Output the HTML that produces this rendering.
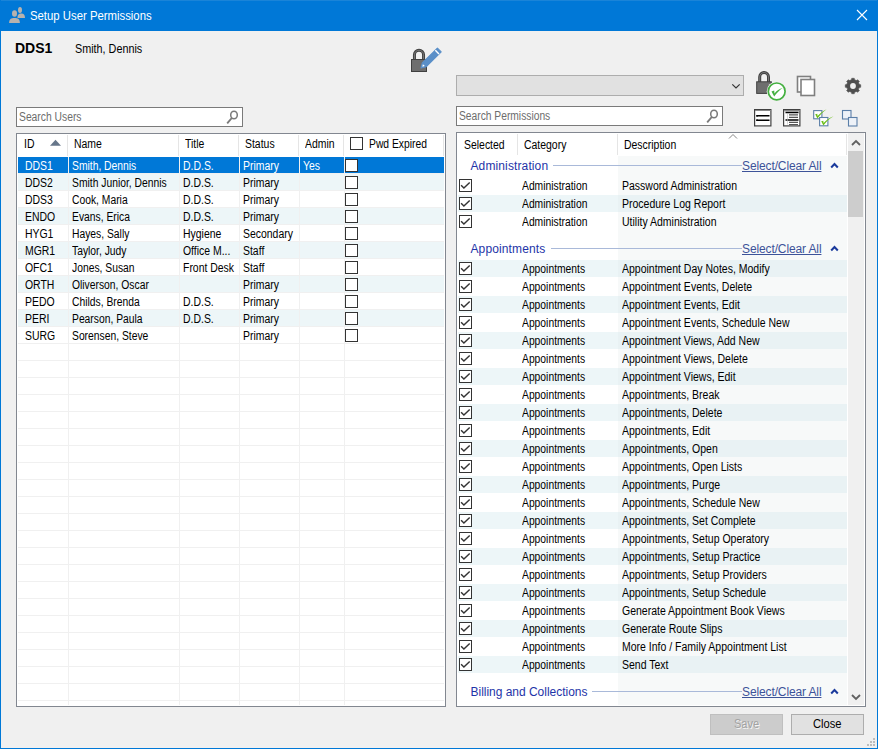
<!DOCTYPE html>
<html><head><meta charset="utf-8"><title>Setup User Permissions</title>
<style>
html,body{margin:0;padding:0;}
body{width:878px;height:749px;position:relative;overflow:hidden;background:#F0F0F0;font-family:"Liberation Sans", sans-serif;}
.r{position:absolute;box-sizing:content-box;}
.t{position:absolute;white-space:pre;font-family:"Liberation Sans", sans-serif;}
svg.r{overflow:visible;}
</style></head><body>
<div class="r" style="left:0px;top:0px;width:878px;height:31px;background:#0078D7"></div>
<div class="r" style="left:0px;top:0px;width:878px;height:1px;background:#1A84D8"></div>
<div class="r" style="left:0px;top:0px;width:1px;height:749px;background:#0078D7"></div>
<div class="r" style="left:877px;top:0px;width:1px;height:749px;background:#0078D7"></div>
<div class="r" style="left:0px;top:748px;width:878px;height:1px;background:#0078D7"></div>
<svg class="r" style="left:8px;top:6px" width="18" height="18" viewBox="0 0 18 18">
<ellipse cx="12" cy="4" rx="2" ry="3" fill="#B7B2AE"/>
<path d="M9.4 12 C9.6 8.6 10.8 7.6 13.2 7.6 C15.6 7.6 16.8 8.6 17 12 Z" fill="#B7B2AE"/>
<ellipse cx="6.5" cy="7.5" rx="2.6" ry="3.4" fill="#0078D7"/>
<path d="M0.2 17.8 C0.3 13.2 2.2 11.2 6.5 11.2 C10.8 11.2 12.7 13.2 12.8 17.8 Z" fill="#0078D7"/>
<ellipse cx="6.5" cy="7.5" rx="2.5" ry="3.3" fill="#B7B2AE"/>
<path d="M1.1 17 C1.2 13.2 3 12 6.5 12 C10 12 11.8 13.2 11.9 17 Z" fill="#B7B2AE"/>
</svg>
<div class="t" style="left:30px;top:10.00px;font-size:12px;line-height:12px;color:#fff;font-weight:normal;transform:scaleX(0.945);transform-origin:0 0;">Setup User Permissions</div>
<svg class="r" style="left:856px;top:9px" width="12" height="12" viewBox="0 0 12 12">
<path d="M1 1 L11 11 M11 1 L1 11" stroke="#fff" stroke-width="1.1"/></svg>
<div class="t" style="left:15px;top:41.00px;font-size:14px;line-height:14px;color:#000;font-weight:bold;">DDS1</div>
<div class="t" style="left:75px;top:43.00px;font-size:12px;line-height:12px;color:#000;font-weight:normal;transform:scaleX(0.9);transform-origin:0 0;">Smith, Dennis</div>
<div class="r" style="left:16px;top:107px;width:225px;height:18px;background:#fff;border:1px solid #7A7A7A"></div>
<div class="t" style="left:19px;top:111.00px;font-size:12px;line-height:12px;color:#6D6D6D;font-weight:normal;transform:scaleX(0.86);transform-origin:0 0;">Search Users</div>
<svg class="r" style="left:226px;top:106.9px" width="16" height="18" viewBox="0 0 16 18">
<ellipse cx="8" cy="8" rx="3.3" ry="3.8" fill="none" stroke="#7A7A7A" stroke-width="1.5"/>
<path d="M5.8 11 L1.2 16.3" stroke="#7A7A7A" stroke-width="1.9"/></svg>
<div class="r" style="left:16px;top:133px;width:428px;height:572px;background:#fff;border:1px solid #828790"></div>
<div class="r" style="left:67px;top:135px;width:1px;height:21px;background:#E5E5E5"></div>
<div class="r" style="left:178px;top:135px;width:1px;height:21px;background:#E5E5E5"></div>
<div class="r" style="left:238px;top:135px;width:1px;height:21px;background:#E5E5E5"></div>
<div class="r" style="left:298px;top:135px;width:1px;height:21px;background:#E5E5E5"></div>
<div class="r" style="left:343px;top:135px;width:1px;height:21px;background:#E5E5E5"></div>
<div class="r" style="left:443px;top:135px;width:1px;height:21px;background:#E5E5E5"></div>
<div class="t" style="left:24px;top:138.00px;font-size:12px;line-height:12px;color:#000;font-weight:normal;transform:scaleX(0.87);transform-origin:0 0;">ID</div>
<svg class="r" style="left:50px;top:139px" width="11" height="7" viewBox="0 0 11 7"><path d="M5.5 0.8 L11 6.8 L0 6.8 Z" fill="#66768A"/></svg>
<div class="t" style="left:74px;top:138.00px;font-size:12px;line-height:12px;color:#000;font-weight:normal;transform:scaleX(0.87);transform-origin:0 0;">Name</div>
<div class="t" style="left:185px;top:138.00px;font-size:12px;line-height:12px;color:#000;font-weight:normal;transform:scaleX(0.87);transform-origin:0 0;">Title</div>
<div class="t" style="left:245px;top:138.00px;font-size:12px;line-height:12px;color:#000;font-weight:normal;transform:scaleX(0.87);transform-origin:0 0;">Status</div>
<div class="t" style="left:305px;top:138.00px;font-size:12px;line-height:12px;color:#000;font-weight:normal;transform:scaleX(0.87);transform-origin:0 0;">Admin</div>
<div class="r" style="left:350px;top:137px;width:11px;height:11px;border:1px solid #333;background:#fff"></div>
<div class="t" style="left:369px;top:138.00px;font-size:12px;line-height:12px;color:#000;font-weight:normal;transform:scaleX(0.86);transform-origin:0 0;">Pwd Expired</div>
<div class="r" style="left:18px;top:173px;width:426px;height:1px;background:#F0F0F0"></div>
<div class="r" style="left:18px;top:190px;width:426px;height:1px;background:#F0F0F0"></div>
<div class="r" style="left:18px;top:207px;width:426px;height:1px;background:#F0F0F0"></div>
<div class="r" style="left:18px;top:224px;width:426px;height:1px;background:#F0F0F0"></div>
<div class="r" style="left:18px;top:241px;width:426px;height:1px;background:#F0F0F0"></div>
<div class="r" style="left:18px;top:258px;width:426px;height:1px;background:#F0F0F0"></div>
<div class="r" style="left:18px;top:275px;width:426px;height:1px;background:#F0F0F0"></div>
<div class="r" style="left:18px;top:292px;width:426px;height:1px;background:#F0F0F0"></div>
<div class="r" style="left:18px;top:309px;width:426px;height:1px;background:#F0F0F0"></div>
<div class="r" style="left:18px;top:326px;width:426px;height:1px;background:#F0F0F0"></div>
<div class="r" style="left:18px;top:343px;width:426px;height:1px;background:#F0F0F0"></div>
<div class="r" style="left:18px;top:360px;width:426px;height:1px;background:#F0F0F0"></div>
<div class="r" style="left:18px;top:377px;width:426px;height:1px;background:#F0F0F0"></div>
<div class="r" style="left:18px;top:394px;width:426px;height:1px;background:#F0F0F0"></div>
<div class="r" style="left:18px;top:411px;width:426px;height:1px;background:#F0F0F0"></div>
<div class="r" style="left:18px;top:428px;width:426px;height:1px;background:#F0F0F0"></div>
<div class="r" style="left:18px;top:445px;width:426px;height:1px;background:#F0F0F0"></div>
<div class="r" style="left:18px;top:462px;width:426px;height:1px;background:#F0F0F0"></div>
<div class="r" style="left:18px;top:479px;width:426px;height:1px;background:#F0F0F0"></div>
<div class="r" style="left:18px;top:496px;width:426px;height:1px;background:#F0F0F0"></div>
<div class="r" style="left:18px;top:513px;width:426px;height:1px;background:#F0F0F0"></div>
<div class="r" style="left:18px;top:530px;width:426px;height:1px;background:#F0F0F0"></div>
<div class="r" style="left:18px;top:547px;width:426px;height:1px;background:#F0F0F0"></div>
<div class="r" style="left:18px;top:564px;width:426px;height:1px;background:#F0F0F0"></div>
<div class="r" style="left:18px;top:581px;width:426px;height:1px;background:#F0F0F0"></div>
<div class="r" style="left:18px;top:598px;width:426px;height:1px;background:#F0F0F0"></div>
<div class="r" style="left:18px;top:615px;width:426px;height:1px;background:#F0F0F0"></div>
<div class="r" style="left:18px;top:632px;width:426px;height:1px;background:#F0F0F0"></div>
<div class="r" style="left:18px;top:649px;width:426px;height:1px;background:#F0F0F0"></div>
<div class="r" style="left:18px;top:666px;width:426px;height:1px;background:#F0F0F0"></div>
<div class="r" style="left:18px;top:683px;width:426px;height:1px;background:#F0F0F0"></div>
<div class="r" style="left:18px;top:700px;width:426px;height:1px;background:#F0F0F0"></div>
<div class="r" style="left:18px;top:157px;width:50px;height:16px;background:#0078D7"></div>
<div class="r" style="left:69px;top:157px;width:110px;height:16px;background:#0078D7"></div>
<div class="r" style="left:180px;top:157px;width:59px;height:16px;background:#0078D7"></div>
<div class="r" style="left:240px;top:157px;width:59px;height:16px;background:#0078D7"></div>
<div class="r" style="left:300px;top:157px;width:44px;height:16px;background:#0078D7"></div>
<div class="r" style="left:345px;top:157px;width:99px;height:16px;background:#0078D7"></div>
<div class="t" style="left:25px;top:160.00px;font-size:12px;line-height:12px;color:#fff;font-weight:normal;transform:scaleX(0.87);transform-origin:0 0;">DDS1</div>
<div class="t" style="left:72px;top:160.00px;font-size:12px;line-height:12px;color:#fff;font-weight:normal;transform:scaleX(0.86);transform-origin:0 0;">Smith, Dennis</div>
<div class="t" style="left:182.5px;top:160.00px;font-size:12px;line-height:12px;color:#fff;font-weight:normal;transform:scaleX(0.87);transform-origin:0 0;">D.D.S.</div>
<div class="t" style="left:242.5px;top:160.00px;font-size:12px;line-height:12px;color:#fff;font-weight:normal;transform:scaleX(0.87);transform-origin:0 0;">Primary</div>
<div class="t" style="left:303px;top:160.00px;font-size:12px;line-height:12px;color:#fff;font-weight:normal;transform:scaleX(0.87);transform-origin:0 0;">Yes</div>
<div class="r" style="left:345px;top:159px;width:11px;height:11px;border:1px solid #333;background:#fff"></div>
<div class="r" style="left:18px;top:174px;width:426px;height:16px;background:#EDF6F8"></div>
<div class="t" style="left:25px;top:177.00px;font-size:12px;line-height:12px;color:#000;font-weight:normal;transform:scaleX(0.87);transform-origin:0 0;">DDS2</div>
<div class="t" style="left:72px;top:177.00px;font-size:12px;line-height:12px;color:#000;font-weight:normal;transform:scaleX(0.86);transform-origin:0 0;">Smith Junior, Dennis</div>
<div class="t" style="left:182.5px;top:177.00px;font-size:12px;line-height:12px;color:#000;font-weight:normal;transform:scaleX(0.87);transform-origin:0 0;">D.D.S.</div>
<div class="t" style="left:242.5px;top:177.00px;font-size:12px;line-height:12px;color:#000;font-weight:normal;transform:scaleX(0.87);transform-origin:0 0;">Primary</div>
<div class="t" style="left:303px;top:177.00px;font-size:12px;line-height:12px;color:#000;font-weight:normal;transform:scaleX(0.87);transform-origin:0 0;"></div>
<div class="r" style="left:345px;top:176px;width:11px;height:11px;border:1px solid #333;background:#fff"></div>
<div class="t" style="left:25px;top:194.00px;font-size:12px;line-height:12px;color:#000;font-weight:normal;transform:scaleX(0.87);transform-origin:0 0;">DDS3</div>
<div class="t" style="left:72px;top:194.00px;font-size:12px;line-height:12px;color:#000;font-weight:normal;transform:scaleX(0.86);transform-origin:0 0;">Cook, Maria</div>
<div class="t" style="left:182.5px;top:194.00px;font-size:12px;line-height:12px;color:#000;font-weight:normal;transform:scaleX(0.87);transform-origin:0 0;">D.D.S.</div>
<div class="t" style="left:242.5px;top:194.00px;font-size:12px;line-height:12px;color:#000;font-weight:normal;transform:scaleX(0.87);transform-origin:0 0;">Primary</div>
<div class="t" style="left:303px;top:194.00px;font-size:12px;line-height:12px;color:#000;font-weight:normal;transform:scaleX(0.87);transform-origin:0 0;"></div>
<div class="r" style="left:345px;top:193px;width:11px;height:11px;border:1px solid #333;background:#fff"></div>
<div class="r" style="left:18px;top:208px;width:426px;height:16px;background:#EDF6F8"></div>
<div class="t" style="left:25px;top:211.00px;font-size:12px;line-height:12px;color:#000;font-weight:normal;transform:scaleX(0.87);transform-origin:0 0;">ENDO</div>
<div class="t" style="left:72px;top:211.00px;font-size:12px;line-height:12px;color:#000;font-weight:normal;transform:scaleX(0.86);transform-origin:0 0;">Evans, Erica</div>
<div class="t" style="left:182.5px;top:211.00px;font-size:12px;line-height:12px;color:#000;font-weight:normal;transform:scaleX(0.87);transform-origin:0 0;">D.D.S.</div>
<div class="t" style="left:242.5px;top:211.00px;font-size:12px;line-height:12px;color:#000;font-weight:normal;transform:scaleX(0.87);transform-origin:0 0;">Primary</div>
<div class="t" style="left:303px;top:211.00px;font-size:12px;line-height:12px;color:#000;font-weight:normal;transform:scaleX(0.87);transform-origin:0 0;"></div>
<div class="r" style="left:345px;top:210px;width:11px;height:11px;border:1px solid #333;background:#fff"></div>
<div class="t" style="left:25px;top:228.00px;font-size:12px;line-height:12px;color:#000;font-weight:normal;transform:scaleX(0.87);transform-origin:0 0;">HYG1</div>
<div class="t" style="left:72px;top:228.00px;font-size:12px;line-height:12px;color:#000;font-weight:normal;transform:scaleX(0.86);transform-origin:0 0;">Hayes, Sally</div>
<div class="t" style="left:182.5px;top:228.00px;font-size:12px;line-height:12px;color:#000;font-weight:normal;transform:scaleX(0.87);transform-origin:0 0;">Hygiene</div>
<div class="t" style="left:242.5px;top:228.00px;font-size:12px;line-height:12px;color:#000;font-weight:normal;transform:scaleX(0.87);transform-origin:0 0;">Secondary</div>
<div class="t" style="left:303px;top:228.00px;font-size:12px;line-height:12px;color:#000;font-weight:normal;transform:scaleX(0.87);transform-origin:0 0;"></div>
<div class="r" style="left:345px;top:227px;width:11px;height:11px;border:1px solid #333;background:#fff"></div>
<div class="r" style="left:18px;top:242px;width:426px;height:16px;background:#EDF6F8"></div>
<div class="t" style="left:25px;top:245.00px;font-size:12px;line-height:12px;color:#000;font-weight:normal;transform:scaleX(0.87);transform-origin:0 0;">MGR1</div>
<div class="t" style="left:72px;top:245.00px;font-size:12px;line-height:12px;color:#000;font-weight:normal;transform:scaleX(0.86);transform-origin:0 0;">Taylor, Judy</div>
<div class="t" style="left:182.5px;top:245.00px;font-size:12px;line-height:12px;color:#000;font-weight:normal;transform:scaleX(0.87);transform-origin:0 0;">Office M...</div>
<div class="t" style="left:242.5px;top:245.00px;font-size:12px;line-height:12px;color:#000;font-weight:normal;transform:scaleX(0.87);transform-origin:0 0;">Staff</div>
<div class="t" style="left:303px;top:245.00px;font-size:12px;line-height:12px;color:#000;font-weight:normal;transform:scaleX(0.87);transform-origin:0 0;"></div>
<div class="r" style="left:345px;top:244px;width:11px;height:11px;border:1px solid #333;background:#fff"></div>
<div class="t" style="left:25px;top:262.00px;font-size:12px;line-height:12px;color:#000;font-weight:normal;transform:scaleX(0.87);transform-origin:0 0;">OFC1</div>
<div class="t" style="left:72px;top:262.00px;font-size:12px;line-height:12px;color:#000;font-weight:normal;transform:scaleX(0.86);transform-origin:0 0;">Jones, Susan</div>
<div class="t" style="left:182.5px;top:262.00px;font-size:12px;line-height:12px;color:#000;font-weight:normal;transform:scaleX(0.87);transform-origin:0 0;">Front Desk</div>
<div class="t" style="left:242.5px;top:262.00px;font-size:12px;line-height:12px;color:#000;font-weight:normal;transform:scaleX(0.87);transform-origin:0 0;">Staff</div>
<div class="t" style="left:303px;top:262.00px;font-size:12px;line-height:12px;color:#000;font-weight:normal;transform:scaleX(0.87);transform-origin:0 0;"></div>
<div class="r" style="left:345px;top:261px;width:11px;height:11px;border:1px solid #333;background:#fff"></div>
<div class="r" style="left:18px;top:276px;width:426px;height:16px;background:#EDF6F8"></div>
<div class="t" style="left:25px;top:279.00px;font-size:12px;line-height:12px;color:#000;font-weight:normal;transform:scaleX(0.87);transform-origin:0 0;">ORTH</div>
<div class="t" style="left:72px;top:279.00px;font-size:12px;line-height:12px;color:#000;font-weight:normal;transform:scaleX(0.86);transform-origin:0 0;">Oliverson, Oscar</div>
<div class="t" style="left:182.5px;top:279.00px;font-size:12px;line-height:12px;color:#000;font-weight:normal;transform:scaleX(0.87);transform-origin:0 0;"></div>
<div class="t" style="left:242.5px;top:279.00px;font-size:12px;line-height:12px;color:#000;font-weight:normal;transform:scaleX(0.87);transform-origin:0 0;">Primary</div>
<div class="t" style="left:303px;top:279.00px;font-size:12px;line-height:12px;color:#000;font-weight:normal;transform:scaleX(0.87);transform-origin:0 0;"></div>
<div class="r" style="left:345px;top:278px;width:11px;height:11px;border:1px solid #333;background:#fff"></div>
<div class="t" style="left:25px;top:296.00px;font-size:12px;line-height:12px;color:#000;font-weight:normal;transform:scaleX(0.87);transform-origin:0 0;">PEDO</div>
<div class="t" style="left:72px;top:296.00px;font-size:12px;line-height:12px;color:#000;font-weight:normal;transform:scaleX(0.86);transform-origin:0 0;">Childs, Brenda</div>
<div class="t" style="left:182.5px;top:296.00px;font-size:12px;line-height:12px;color:#000;font-weight:normal;transform:scaleX(0.87);transform-origin:0 0;">D.D.S.</div>
<div class="t" style="left:242.5px;top:296.00px;font-size:12px;line-height:12px;color:#000;font-weight:normal;transform:scaleX(0.87);transform-origin:0 0;">Primary</div>
<div class="t" style="left:303px;top:296.00px;font-size:12px;line-height:12px;color:#000;font-weight:normal;transform:scaleX(0.87);transform-origin:0 0;"></div>
<div class="r" style="left:345px;top:295px;width:11px;height:11px;border:1px solid #333;background:#fff"></div>
<div class="r" style="left:18px;top:310px;width:426px;height:16px;background:#EDF6F8"></div>
<div class="t" style="left:25px;top:313.00px;font-size:12px;line-height:12px;color:#000;font-weight:normal;transform:scaleX(0.87);transform-origin:0 0;">PERI</div>
<div class="t" style="left:72px;top:313.00px;font-size:12px;line-height:12px;color:#000;font-weight:normal;transform:scaleX(0.86);transform-origin:0 0;">Pearson, Paula</div>
<div class="t" style="left:182.5px;top:313.00px;font-size:12px;line-height:12px;color:#000;font-weight:normal;transform:scaleX(0.87);transform-origin:0 0;">D.D.S.</div>
<div class="t" style="left:242.5px;top:313.00px;font-size:12px;line-height:12px;color:#000;font-weight:normal;transform:scaleX(0.87);transform-origin:0 0;">Primary</div>
<div class="t" style="left:303px;top:313.00px;font-size:12px;line-height:12px;color:#000;font-weight:normal;transform:scaleX(0.87);transform-origin:0 0;"></div>
<div class="r" style="left:345px;top:312px;width:11px;height:11px;border:1px solid #333;background:#fff"></div>
<div class="t" style="left:25px;top:330.00px;font-size:12px;line-height:12px;color:#000;font-weight:normal;transform:scaleX(0.87);transform-origin:0 0;">SURG</div>
<div class="t" style="left:72px;top:330.00px;font-size:12px;line-height:12px;color:#000;font-weight:normal;transform:scaleX(0.86);transform-origin:0 0;">Sorensen, Steve</div>
<div class="t" style="left:182.5px;top:330.00px;font-size:12px;line-height:12px;color:#000;font-weight:normal;transform:scaleX(0.87);transform-origin:0 0;"></div>
<div class="t" style="left:242.5px;top:330.00px;font-size:12px;line-height:12px;color:#000;font-weight:normal;transform:scaleX(0.87);transform-origin:0 0;">Primary</div>
<div class="t" style="left:303px;top:330.00px;font-size:12px;line-height:12px;color:#000;font-weight:normal;transform:scaleX(0.87);transform-origin:0 0;"></div>
<div class="r" style="left:345px;top:329px;width:11px;height:11px;border:1px solid #333;background:#fff"></div>
<div class="r" style="left:68px;top:157px;width:1px;height:548px;background:#F0F0F0"></div>
<div class="r" style="left:179px;top:157px;width:1px;height:548px;background:#F0F0F0"></div>
<div class="r" style="left:239px;top:157px;width:1px;height:548px;background:#F0F0F0"></div>
<div class="r" style="left:299px;top:157px;width:1px;height:548px;background:#F0F0F0"></div>
<div class="r" style="left:344px;top:157px;width:1px;height:548px;background:#F0F0F0"></div>
<svg class="r" style="left:405px;top:42px" width="40" height="32" viewBox="0 0 40 32">
<path d="M9.45 17.5 V12.8 A4.55 4.55 0 0 1 18.55 12.8 V17.5" fill="none" stroke="#404040" stroke-width="3"/>
<path d="M9.45 17.5 V12.8 A4.55 4.55 0 0 1 18.55 12.8 V17.5" fill="none" stroke="#777" stroke-width="1"/>
<rect x="6.5" y="17.5" width="15" height="12" fill="#6E6E6E" stroke="#404040" stroke-width="1"/>
<path d="M16 26 L17.31 20.92 L32.41 6.07 L36.19 9.93 L21.09 24.78 Z" fill="#5A8FC8" stroke="#5A8FC8" stroke-width="1.1" stroke-linejoin="round"/>
<path d="M17.3 24.7 L17.9 22.2 L19.9 24.1 Z" fill="#fff"/>
<path d="M30.34 8.25 L33.98 11.95" stroke="#fff" stroke-width="1.4"/>
</svg>
<div class="r" style="left:456px;top:75px;width:286px;height:19px;background:#E1E1E1;border:1px solid #ADADAD"></div>
<svg class="r" style="left:730.5px;top:82.5px" width="11" height="7" viewBox="0 0 11 7"><path d="M1.3 1.3 L5 5 L8.7 1.3" fill="none" stroke="#333" stroke-width="1.2"/></svg>
<svg class="r" style="left:752px;top:66px" width="40" height="40" viewBox="0 0 40 40">
<path d="M7.7 16 V10.9 A4.4 4.4 0 0 1 16.5 10.9 V16" fill="none" stroke="#404040" stroke-width="3"/>
<path d="M7.7 16 V10.9 A4.4 4.4 0 0 1 16.5 10.9 V16" fill="none" stroke="#777" stroke-width="1"/>
<rect x="4.7" y="15.8" width="14.6" height="11.6" fill="#6E6E6E" stroke="#404040" stroke-width="1"/>
<circle cx="24.7" cy="25.4" r="10" fill="#F0F0F0"/>
<circle cx="24.7" cy="25.4" r="8.4" fill="#fff" stroke="#45B040" stroke-width="1.7"/>
<path d="M19.5 25.5 L22.2 24.6 L22.5 27.4 C24.5 25 27.5 22.8 30.8 21.8 C27.8 24 24.5 27.2 22.2 30.5 Z" fill="#45B040"/>
</svg>
<svg class="r" style="left:796px;top:75px" width="20" height="22" viewBox="0 0 20 22">
<rect x="1.5" y="1.5" width="13" height="15.5" fill="#fff" stroke="#7F7F7F" stroke-width="1.6"/>
<rect x="5" y="4.5" width="13.5" height="16" fill="#fff" stroke="#7F7F7F" stroke-width="1.6"/>
</svg>
<svg class="r" style="left:844px;top:77px" width="18" height="18" viewBox="-9 -9 18 18">
<g fill="#505050" stroke="#505050" stroke-width="0.6" stroke-linejoin="round">
<circle r="6.4"/>
<rect x="-1.3" y="-7.7" width="2.6" height="3" transform="rotate(0)"/><rect x="-1.3" y="-7.7" width="2.6" height="3" transform="rotate(45)"/><rect x="-1.3" y="-7.7" width="2.6" height="3" transform="rotate(90)"/><rect x="-1.3" y="-7.7" width="2.6" height="3" transform="rotate(135)"/><rect x="-1.3" y="-7.7" width="2.6" height="3" transform="rotate(180)"/><rect x="-1.3" y="-7.7" width="2.6" height="3" transform="rotate(225)"/><rect x="-1.3" y="-7.7" width="2.6" height="3" transform="rotate(270)"/><rect x="-1.3" y="-7.7" width="2.6" height="3" transform="rotate(315)"/>
</g><circle r="2.9" fill="#F0F0F0"/></svg>
<div class="r" style="left:456px;top:106px;width:265px;height:18px;background:#fff;border:1px solid #7A7A7A"></div>
<div class="t" style="left:458.5px;top:110.00px;font-size:12px;line-height:12px;color:#6D6D6D;font-weight:normal;transform:scaleX(0.855);transform-origin:0 0;">Search Permissions</div>
<svg class="r" style="left:706.1px;top:105.7px" width="16" height="18" viewBox="0 0 16 18">
<ellipse cx="8" cy="8" rx="3.3" ry="3.8" fill="none" stroke="#7A7A7A" stroke-width="1.5"/>
<path d="M5.8 11 L1.2 16.3" stroke="#7A7A7A" stroke-width="1.9"/></svg>
<svg class="r" style="left:754px;top:109px" width="18" height="18" viewBox="0 0 18 18">
<rect x="0.6" y="0.6" width="16.3" height="16.3" fill="#fff" stroke="#404040" stroke-width="1.2"/>
<rect x="1" y="1" width="16" height="1" fill="#888"/>
<path d="M2.5 6.8 H15.5 M2.5 11.2 H15.5" stroke="#000" stroke-width="1.4"/>
<circle cx="3" cy="6.8" r="0.9" fill="#000"/><circle cx="3" cy="11.2" r="0.9" fill="#000"/>
</svg>
<svg class="r" style="left:783px;top:109px" width="18" height="18" viewBox="0 0 18 18">
<rect x="0.6" y="0.6" width="16.3" height="16.3" fill="#fff" stroke="#404040" stroke-width="1.2"/>
<rect x="1" y="1" width="16" height="1.3" fill="#888"/>
<path d="M2.5 3.5 H15.5 M2.5 11 H15.5" stroke="#000" stroke-width="1.5"/>
<path d="M6 5.8 H15 M6 8.3 H15 M6 13.3 H15 M6 15.5 H15" stroke="#555" stroke-width="1.2"/>
<path d="M4.5 4.5 V15.5" stroke="#bbb" stroke-width="0.6"/>
</svg>
<svg class="r" style="left:806px;top:102px" width="30" height="26" viewBox="0 0 30 26">
<rect x="7.7" y="8.6" width="8.2" height="8.2" fill="#fff" stroke="#5B7FA8" stroke-width="1.1"/>
<rect x="13.6" y="15.5" width="8.3" height="8.3" fill="#fff" stroke="#5B7FA8" stroke-width="1.1"/>
<path d="M9.2 12.3 L11.3 11.8 L11.6 14 C13.8 11.6 16.5 9.2 20.6 7.3 C17 9.8 14.6 12.4 11.4 16.5 Z" fill="#6CBF1A"/>
<path d="M15.2 19.3 L17.3 18.8 L17.6 21 C19.8 18.6 22.5 16.2 27.6 14.3 C23 16.8 20.6 19.4 17.4 23.5 Z" fill="#6CBF1A"/>
</svg>
<svg class="r" style="left:841px;top:109px" width="18" height="18" viewBox="0 0 18 18">
<rect x="1.5" y="1.5" width="8.5" height="8.5" fill="#EEF2F8" stroke="#5B7FA8" stroke-width="1.1"/>
<rect x="7.5" y="8.5" width="8.5" height="8.5" fill="#EEF2F8" stroke="#5B7FA8" stroke-width="1.1"/>
</svg>
<div class="r" style="left:456px;top:132px;width:408px;height:573px;background:#fff;border:1px solid #828790"></div>
<div class="r" style="left:517px;top:134px;width:1px;height:21px;background:#E5E5E5"></div>
<div class="r" style="left:617px;top:134px;width:1px;height:21px;background:#E5E5E5"></div>
<div class="r" style="left:846px;top:134px;width:1px;height:21px;background:#E5E5E5"></div>
<div class="t" style="left:464px;top:139.00px;font-size:12px;line-height:12px;color:#000;font-weight:normal;transform:scaleX(0.87);transform-origin:0 0;">Selected</div>
<div class="t" style="left:523.5px;top:139.00px;font-size:12px;line-height:12px;color:#000;font-weight:normal;transform:scaleX(0.87);transform-origin:0 0;">Category</div>
<div class="t" style="left:624px;top:139.00px;font-size:12px;line-height:12px;color:#000;font-weight:normal;transform:scaleX(0.87);transform-origin:0 0;">Description</div>
<svg class="r" style="left:728px;top:133px" width="10" height="7" viewBox="0 0 10 7"><path d="M1 5.5 L5 1.5 L9 5.5" fill="none" stroke="#888" stroke-width="1"/></svg>
<div class="r" style="left:618px;top:156px;width:229px;height:549px;background:#F7F9F9"></div>
<div class="r" style="left:848px;top:133px;width:16px;height:572px;background:#F0F0F0"></div>
<div class="r" style="left:848px;top:151px;width:15px;height:66px;background:#CDCDCD"></div>
<svg class="r" style="left:851px;top:139px" width="10" height="8" viewBox="0 0 10 8"><path d="M1 6 L5 2 L9 6" fill="none" stroke="#606060" stroke-width="1.8"/></svg>
<svg class="r" style="left:851px;top:693px" width="10" height="8" viewBox="0 0 10 8"><path d="M1 2 L5 6 L9 2" fill="none" stroke="#606060" stroke-width="1.8"/></svg>
<div class="t" style="left:470.5px;top:160.00px;font-size:12px;line-height:12px;color:#1E34A8;font-weight:normal;letter-spacing:0.12px;">Administration</div>
<div class="r" style="left:553.0px;top:165px;width:189.0px;height:1px;background:#A9B9D9"></div>
<div class="t" style="left:742px;top:160.00px;font-size:12px;line-height:12px;color:#3D5399;font-weight:normal;letter-spacing:-0.12px;text-decoration:underline;">Select/Clear All</div>
<svg class="r" style="left:830px;top:162px" width="9" height="7" viewBox="0 0 9 7"><path d="M1.2 5.5 L4.5 2 L7.8 5.5" fill="none" stroke="#1A3A9C" stroke-width="2"/></svg>
<svg class="r" style="left:459px;top:179px" width="13" height="13" viewBox="0 0 13 13"><rect x="0.5" y="0.5" width="12" height="12" fill="#fff" stroke="#333" stroke-width="1"/><path d="M2.1 6.3 L4.9 9.1 L10.7 3.4" fill="none" stroke="#333" stroke-width="1.4"/></svg>
<div class="t" style="left:522px;top:180.00px;font-size:12px;line-height:12px;color:#000;font-weight:normal;transform:scaleX(0.86);transform-origin:0 0;">Administration</div>
<div class="t" style="left:622px;top:180.00px;font-size:12px;line-height:12px;color:#000;font-weight:normal;transform:scaleX(0.875);transform-origin:0 0;">Password Administration</div>
<div class="r" style="left:458px;top:195px;width:389px;height:17px;background:#EDF6F8"></div>
<div class="r" style="left:618px;top:195px;width:229px;height:17px;background:#E9F2F4"></div>
<svg class="r" style="left:459px;top:197px" width="13" height="13" viewBox="0 0 13 13"><rect x="0.5" y="0.5" width="12" height="12" fill="#fff" stroke="#333" stroke-width="1"/><path d="M2.1 6.3 L4.9 9.1 L10.7 3.4" fill="none" stroke="#333" stroke-width="1.4"/></svg>
<div class="t" style="left:522px;top:198.00px;font-size:12px;line-height:12px;color:#000;font-weight:normal;transform:scaleX(0.86);transform-origin:0 0;">Administration</div>
<div class="t" style="left:622px;top:198.00px;font-size:12px;line-height:12px;color:#000;font-weight:normal;transform:scaleX(0.875);transform-origin:0 0;">Procedure Log Report</div>
<svg class="r" style="left:459px;top:215px" width="13" height="13" viewBox="0 0 13 13"><rect x="0.5" y="0.5" width="12" height="12" fill="#fff" stroke="#333" stroke-width="1"/><path d="M2.1 6.3 L4.9 9.1 L10.7 3.4" fill="none" stroke="#333" stroke-width="1.4"/></svg>
<div class="t" style="left:522px;top:216.00px;font-size:12px;line-height:12px;color:#000;font-weight:normal;transform:scaleX(0.86);transform-origin:0 0;">Administration</div>
<div class="t" style="left:622px;top:216.00px;font-size:12px;line-height:12px;color:#000;font-weight:normal;transform:scaleX(0.875);transform-origin:0 0;">Utility Administration</div>
<div class="t" style="left:470.5px;top:243.00px;font-size:12px;line-height:12px;color:#1E34A8;font-weight:normal;letter-spacing:0.12px;">Appointments</div>
<div class="r" style="left:550.5px;top:248px;width:191.5px;height:1px;background:#A9B9D9"></div>
<div class="t" style="left:742px;top:243.00px;font-size:12px;line-height:12px;color:#3D5399;font-weight:normal;letter-spacing:-0.12px;text-decoration:underline;">Select/Clear All</div>
<svg class="r" style="left:830px;top:245px" width="9" height="7" viewBox="0 0 9 7"><path d="M1.2 5.5 L4.5 2 L7.8 5.5" fill="none" stroke="#1A3A9C" stroke-width="2"/></svg>
<div class="r" style="left:458px;top:260px;width:389px;height:17px;background:#EDF6F8"></div>
<div class="r" style="left:618px;top:260px;width:229px;height:17px;background:#E9F2F4"></div>
<svg class="r" style="left:459px;top:262px" width="13" height="13" viewBox="0 0 13 13"><rect x="0.5" y="0.5" width="12" height="12" fill="#fff" stroke="#333" stroke-width="1"/><path d="M2.1 6.3 L4.9 9.1 L10.7 3.4" fill="none" stroke="#333" stroke-width="1.4"/></svg>
<div class="t" style="left:522px;top:263.00px;font-size:12px;line-height:12px;color:#000;font-weight:normal;transform:scaleX(0.86);transform-origin:0 0;">Appointments</div>
<div class="t" style="left:622px;top:263.00px;font-size:12px;line-height:12px;color:#000;font-weight:normal;transform:scaleX(0.875);transform-origin:0 0;">Appointment Day Notes, Modify</div>
<svg class="r" style="left:459px;top:280px" width="13" height="13" viewBox="0 0 13 13"><rect x="0.5" y="0.5" width="12" height="12" fill="#fff" stroke="#333" stroke-width="1"/><path d="M2.1 6.3 L4.9 9.1 L10.7 3.4" fill="none" stroke="#333" stroke-width="1.4"/></svg>
<div class="t" style="left:522px;top:281.00px;font-size:12px;line-height:12px;color:#000;font-weight:normal;transform:scaleX(0.86);transform-origin:0 0;">Appointments</div>
<div class="t" style="left:622px;top:281.00px;font-size:12px;line-height:12px;color:#000;font-weight:normal;transform:scaleX(0.875);transform-origin:0 0;">Appointment Events, Delete</div>
<div class="r" style="left:458px;top:296px;width:389px;height:17px;background:#EDF6F8"></div>
<div class="r" style="left:618px;top:296px;width:229px;height:17px;background:#E9F2F4"></div>
<svg class="r" style="left:459px;top:298px" width="13" height="13" viewBox="0 0 13 13"><rect x="0.5" y="0.5" width="12" height="12" fill="#fff" stroke="#333" stroke-width="1"/><path d="M2.1 6.3 L4.9 9.1 L10.7 3.4" fill="none" stroke="#333" stroke-width="1.4"/></svg>
<div class="t" style="left:522px;top:299.00px;font-size:12px;line-height:12px;color:#000;font-weight:normal;transform:scaleX(0.86);transform-origin:0 0;">Appointments</div>
<div class="t" style="left:622px;top:299.00px;font-size:12px;line-height:12px;color:#000;font-weight:normal;transform:scaleX(0.875);transform-origin:0 0;">Appointment Events, Edit</div>
<svg class="r" style="left:459px;top:316px" width="13" height="13" viewBox="0 0 13 13"><rect x="0.5" y="0.5" width="12" height="12" fill="#fff" stroke="#333" stroke-width="1"/><path d="M2.1 6.3 L4.9 9.1 L10.7 3.4" fill="none" stroke="#333" stroke-width="1.4"/></svg>
<div class="t" style="left:522px;top:317.00px;font-size:12px;line-height:12px;color:#000;font-weight:normal;transform:scaleX(0.86);transform-origin:0 0;">Appointments</div>
<div class="t" style="left:622px;top:317.00px;font-size:12px;line-height:12px;color:#000;font-weight:normal;transform:scaleX(0.875);transform-origin:0 0;">Appointment Events, Schedule New</div>
<div class="r" style="left:458px;top:332px;width:389px;height:17px;background:#EDF6F8"></div>
<div class="r" style="left:618px;top:332px;width:229px;height:17px;background:#E9F2F4"></div>
<svg class="r" style="left:459px;top:334px" width="13" height="13" viewBox="0 0 13 13"><rect x="0.5" y="0.5" width="12" height="12" fill="#fff" stroke="#333" stroke-width="1"/><path d="M2.1 6.3 L4.9 9.1 L10.7 3.4" fill="none" stroke="#333" stroke-width="1.4"/></svg>
<div class="t" style="left:522px;top:335.00px;font-size:12px;line-height:12px;color:#000;font-weight:normal;transform:scaleX(0.86);transform-origin:0 0;">Appointments</div>
<div class="t" style="left:622px;top:335.00px;font-size:12px;line-height:12px;color:#000;font-weight:normal;transform:scaleX(0.875);transform-origin:0 0;">Appointment Views, Add New</div>
<svg class="r" style="left:459px;top:352px" width="13" height="13" viewBox="0 0 13 13"><rect x="0.5" y="0.5" width="12" height="12" fill="#fff" stroke="#333" stroke-width="1"/><path d="M2.1 6.3 L4.9 9.1 L10.7 3.4" fill="none" stroke="#333" stroke-width="1.4"/></svg>
<div class="t" style="left:522px;top:353.00px;font-size:12px;line-height:12px;color:#000;font-weight:normal;transform:scaleX(0.86);transform-origin:0 0;">Appointments</div>
<div class="t" style="left:622px;top:353.00px;font-size:12px;line-height:12px;color:#000;font-weight:normal;transform:scaleX(0.875);transform-origin:0 0;">Appointment Views, Delete</div>
<div class="r" style="left:458px;top:368px;width:389px;height:17px;background:#EDF6F8"></div>
<div class="r" style="left:618px;top:368px;width:229px;height:17px;background:#E9F2F4"></div>
<svg class="r" style="left:459px;top:370px" width="13" height="13" viewBox="0 0 13 13"><rect x="0.5" y="0.5" width="12" height="12" fill="#fff" stroke="#333" stroke-width="1"/><path d="M2.1 6.3 L4.9 9.1 L10.7 3.4" fill="none" stroke="#333" stroke-width="1.4"/></svg>
<div class="t" style="left:522px;top:371.00px;font-size:12px;line-height:12px;color:#000;font-weight:normal;transform:scaleX(0.86);transform-origin:0 0;">Appointments</div>
<div class="t" style="left:622px;top:371.00px;font-size:12px;line-height:12px;color:#000;font-weight:normal;transform:scaleX(0.875);transform-origin:0 0;">Appointment Views, Edit</div>
<svg class="r" style="left:459px;top:388px" width="13" height="13" viewBox="0 0 13 13"><rect x="0.5" y="0.5" width="12" height="12" fill="#fff" stroke="#333" stroke-width="1"/><path d="M2.1 6.3 L4.9 9.1 L10.7 3.4" fill="none" stroke="#333" stroke-width="1.4"/></svg>
<div class="t" style="left:522px;top:389.00px;font-size:12px;line-height:12px;color:#000;font-weight:normal;transform:scaleX(0.86);transform-origin:0 0;">Appointments</div>
<div class="t" style="left:622px;top:389.00px;font-size:12px;line-height:12px;color:#000;font-weight:normal;transform:scaleX(0.875);transform-origin:0 0;">Appointments, Break</div>
<div class="r" style="left:458px;top:404px;width:389px;height:17px;background:#EDF6F8"></div>
<div class="r" style="left:618px;top:404px;width:229px;height:17px;background:#E9F2F4"></div>
<svg class="r" style="left:459px;top:406px" width="13" height="13" viewBox="0 0 13 13"><rect x="0.5" y="0.5" width="12" height="12" fill="#fff" stroke="#333" stroke-width="1"/><path d="M2.1 6.3 L4.9 9.1 L10.7 3.4" fill="none" stroke="#333" stroke-width="1.4"/></svg>
<div class="t" style="left:522px;top:407.00px;font-size:12px;line-height:12px;color:#000;font-weight:normal;transform:scaleX(0.86);transform-origin:0 0;">Appointments</div>
<div class="t" style="left:622px;top:407.00px;font-size:12px;line-height:12px;color:#000;font-weight:normal;transform:scaleX(0.875);transform-origin:0 0;">Appointments, Delete</div>
<svg class="r" style="left:459px;top:424px" width="13" height="13" viewBox="0 0 13 13"><rect x="0.5" y="0.5" width="12" height="12" fill="#fff" stroke="#333" stroke-width="1"/><path d="M2.1 6.3 L4.9 9.1 L10.7 3.4" fill="none" stroke="#333" stroke-width="1.4"/></svg>
<div class="t" style="left:522px;top:425.00px;font-size:12px;line-height:12px;color:#000;font-weight:normal;transform:scaleX(0.86);transform-origin:0 0;">Appointments</div>
<div class="t" style="left:622px;top:425.00px;font-size:12px;line-height:12px;color:#000;font-weight:normal;transform:scaleX(0.875);transform-origin:0 0;">Appointments, Edit</div>
<div class="r" style="left:458px;top:440px;width:389px;height:17px;background:#EDF6F8"></div>
<div class="r" style="left:618px;top:440px;width:229px;height:17px;background:#E9F2F4"></div>
<svg class="r" style="left:459px;top:442px" width="13" height="13" viewBox="0 0 13 13"><rect x="0.5" y="0.5" width="12" height="12" fill="#fff" stroke="#333" stroke-width="1"/><path d="M2.1 6.3 L4.9 9.1 L10.7 3.4" fill="none" stroke="#333" stroke-width="1.4"/></svg>
<div class="t" style="left:522px;top:443.00px;font-size:12px;line-height:12px;color:#000;font-weight:normal;transform:scaleX(0.86);transform-origin:0 0;">Appointments</div>
<div class="t" style="left:622px;top:443.00px;font-size:12px;line-height:12px;color:#000;font-weight:normal;transform:scaleX(0.875);transform-origin:0 0;">Appointments, Open</div>
<svg class="r" style="left:459px;top:460px" width="13" height="13" viewBox="0 0 13 13"><rect x="0.5" y="0.5" width="12" height="12" fill="#fff" stroke="#333" stroke-width="1"/><path d="M2.1 6.3 L4.9 9.1 L10.7 3.4" fill="none" stroke="#333" stroke-width="1.4"/></svg>
<div class="t" style="left:522px;top:461.00px;font-size:12px;line-height:12px;color:#000;font-weight:normal;transform:scaleX(0.86);transform-origin:0 0;">Appointments</div>
<div class="t" style="left:622px;top:461.00px;font-size:12px;line-height:12px;color:#000;font-weight:normal;transform:scaleX(0.875);transform-origin:0 0;">Appointments, Open Lists</div>
<div class="r" style="left:458px;top:476px;width:389px;height:17px;background:#EDF6F8"></div>
<div class="r" style="left:618px;top:476px;width:229px;height:17px;background:#E9F2F4"></div>
<svg class="r" style="left:459px;top:478px" width="13" height="13" viewBox="0 0 13 13"><rect x="0.5" y="0.5" width="12" height="12" fill="#fff" stroke="#333" stroke-width="1"/><path d="M2.1 6.3 L4.9 9.1 L10.7 3.4" fill="none" stroke="#333" stroke-width="1.4"/></svg>
<div class="t" style="left:522px;top:479.00px;font-size:12px;line-height:12px;color:#000;font-weight:normal;transform:scaleX(0.86);transform-origin:0 0;">Appointments</div>
<div class="t" style="left:622px;top:479.00px;font-size:12px;line-height:12px;color:#000;font-weight:normal;transform:scaleX(0.875);transform-origin:0 0;">Appointments, Purge</div>
<svg class="r" style="left:459px;top:496px" width="13" height="13" viewBox="0 0 13 13"><rect x="0.5" y="0.5" width="12" height="12" fill="#fff" stroke="#333" stroke-width="1"/><path d="M2.1 6.3 L4.9 9.1 L10.7 3.4" fill="none" stroke="#333" stroke-width="1.4"/></svg>
<div class="t" style="left:522px;top:497.00px;font-size:12px;line-height:12px;color:#000;font-weight:normal;transform:scaleX(0.86);transform-origin:0 0;">Appointments</div>
<div class="t" style="left:622px;top:497.00px;font-size:12px;line-height:12px;color:#000;font-weight:normal;transform:scaleX(0.875);transform-origin:0 0;">Appointments, Schedule New</div>
<div class="r" style="left:458px;top:512px;width:389px;height:17px;background:#EDF6F8"></div>
<div class="r" style="left:618px;top:512px;width:229px;height:17px;background:#E9F2F4"></div>
<svg class="r" style="left:459px;top:514px" width="13" height="13" viewBox="0 0 13 13"><rect x="0.5" y="0.5" width="12" height="12" fill="#fff" stroke="#333" stroke-width="1"/><path d="M2.1 6.3 L4.9 9.1 L10.7 3.4" fill="none" stroke="#333" stroke-width="1.4"/></svg>
<div class="t" style="left:522px;top:515.00px;font-size:12px;line-height:12px;color:#000;font-weight:normal;transform:scaleX(0.86);transform-origin:0 0;">Appointments</div>
<div class="t" style="left:622px;top:515.00px;font-size:12px;line-height:12px;color:#000;font-weight:normal;transform:scaleX(0.875);transform-origin:0 0;">Appointments, Set Complete</div>
<svg class="r" style="left:459px;top:532px" width="13" height="13" viewBox="0 0 13 13"><rect x="0.5" y="0.5" width="12" height="12" fill="#fff" stroke="#333" stroke-width="1"/><path d="M2.1 6.3 L4.9 9.1 L10.7 3.4" fill="none" stroke="#333" stroke-width="1.4"/></svg>
<div class="t" style="left:522px;top:533.00px;font-size:12px;line-height:12px;color:#000;font-weight:normal;transform:scaleX(0.86);transform-origin:0 0;">Appointments</div>
<div class="t" style="left:622px;top:533.00px;font-size:12px;line-height:12px;color:#000;font-weight:normal;transform:scaleX(0.875);transform-origin:0 0;">Appointments, Setup Operatory</div>
<div class="r" style="left:458px;top:548px;width:389px;height:17px;background:#EDF6F8"></div>
<div class="r" style="left:618px;top:548px;width:229px;height:17px;background:#E9F2F4"></div>
<svg class="r" style="left:459px;top:550px" width="13" height="13" viewBox="0 0 13 13"><rect x="0.5" y="0.5" width="12" height="12" fill="#fff" stroke="#333" stroke-width="1"/><path d="M2.1 6.3 L4.9 9.1 L10.7 3.4" fill="none" stroke="#333" stroke-width="1.4"/></svg>
<div class="t" style="left:522px;top:551.00px;font-size:12px;line-height:12px;color:#000;font-weight:normal;transform:scaleX(0.86);transform-origin:0 0;">Appointments</div>
<div class="t" style="left:622px;top:551.00px;font-size:12px;line-height:12px;color:#000;font-weight:normal;transform:scaleX(0.875);transform-origin:0 0;">Appointments, Setup Practice</div>
<svg class="r" style="left:459px;top:568px" width="13" height="13" viewBox="0 0 13 13"><rect x="0.5" y="0.5" width="12" height="12" fill="#fff" stroke="#333" stroke-width="1"/><path d="M2.1 6.3 L4.9 9.1 L10.7 3.4" fill="none" stroke="#333" stroke-width="1.4"/></svg>
<div class="t" style="left:522px;top:569.00px;font-size:12px;line-height:12px;color:#000;font-weight:normal;transform:scaleX(0.86);transform-origin:0 0;">Appointments</div>
<div class="t" style="left:622px;top:569.00px;font-size:12px;line-height:12px;color:#000;font-weight:normal;transform:scaleX(0.875);transform-origin:0 0;">Appointments, Setup Providers</div>
<div class="r" style="left:458px;top:584px;width:389px;height:17px;background:#EDF6F8"></div>
<div class="r" style="left:618px;top:584px;width:229px;height:17px;background:#E9F2F4"></div>
<svg class="r" style="left:459px;top:586px" width="13" height="13" viewBox="0 0 13 13"><rect x="0.5" y="0.5" width="12" height="12" fill="#fff" stroke="#333" stroke-width="1"/><path d="M2.1 6.3 L4.9 9.1 L10.7 3.4" fill="none" stroke="#333" stroke-width="1.4"/></svg>
<div class="t" style="left:522px;top:587.00px;font-size:12px;line-height:12px;color:#000;font-weight:normal;transform:scaleX(0.86);transform-origin:0 0;">Appointments</div>
<div class="t" style="left:622px;top:587.00px;font-size:12px;line-height:12px;color:#000;font-weight:normal;transform:scaleX(0.875);transform-origin:0 0;">Appointments, Setup Schedule</div>
<svg class="r" style="left:459px;top:604px" width="13" height="13" viewBox="0 0 13 13"><rect x="0.5" y="0.5" width="12" height="12" fill="#fff" stroke="#333" stroke-width="1"/><path d="M2.1 6.3 L4.9 9.1 L10.7 3.4" fill="none" stroke="#333" stroke-width="1.4"/></svg>
<div class="t" style="left:522px;top:605.00px;font-size:12px;line-height:12px;color:#000;font-weight:normal;transform:scaleX(0.86);transform-origin:0 0;">Appointments</div>
<div class="t" style="left:622px;top:605.00px;font-size:12px;line-height:12px;color:#000;font-weight:normal;transform:scaleX(0.875);transform-origin:0 0;">Generate Appointment Book Views</div>
<div class="r" style="left:458px;top:620px;width:389px;height:17px;background:#EDF6F8"></div>
<div class="r" style="left:618px;top:620px;width:229px;height:17px;background:#E9F2F4"></div>
<svg class="r" style="left:459px;top:622px" width="13" height="13" viewBox="0 0 13 13"><rect x="0.5" y="0.5" width="12" height="12" fill="#fff" stroke="#333" stroke-width="1"/><path d="M2.1 6.3 L4.9 9.1 L10.7 3.4" fill="none" stroke="#333" stroke-width="1.4"/></svg>
<div class="t" style="left:522px;top:623.00px;font-size:12px;line-height:12px;color:#000;font-weight:normal;transform:scaleX(0.86);transform-origin:0 0;">Appointments</div>
<div class="t" style="left:622px;top:623.00px;font-size:12px;line-height:12px;color:#000;font-weight:normal;transform:scaleX(0.875);transform-origin:0 0;">Generate Route Slips</div>
<svg class="r" style="left:459px;top:640px" width="13" height="13" viewBox="0 0 13 13"><rect x="0.5" y="0.5" width="12" height="12" fill="#fff" stroke="#333" stroke-width="1"/><path d="M2.1 6.3 L4.9 9.1 L10.7 3.4" fill="none" stroke="#333" stroke-width="1.4"/></svg>
<div class="t" style="left:522px;top:641.00px;font-size:12px;line-height:12px;color:#000;font-weight:normal;transform:scaleX(0.86);transform-origin:0 0;">Appointments</div>
<div class="t" style="left:622px;top:641.00px;font-size:12px;line-height:12px;color:#000;font-weight:normal;transform:scaleX(0.875);transform-origin:0 0;">More Info / Family Appointment List</div>
<div class="r" style="left:458px;top:656px;width:389px;height:17px;background:#EDF6F8"></div>
<div class="r" style="left:618px;top:656px;width:229px;height:17px;background:#E9F2F4"></div>
<svg class="r" style="left:459px;top:658px" width="13" height="13" viewBox="0 0 13 13"><rect x="0.5" y="0.5" width="12" height="12" fill="#fff" stroke="#333" stroke-width="1"/><path d="M2.1 6.3 L4.9 9.1 L10.7 3.4" fill="none" stroke="#333" stroke-width="1.4"/></svg>
<div class="t" style="left:522px;top:659.00px;font-size:12px;line-height:12px;color:#000;font-weight:normal;transform:scaleX(0.86);transform-origin:0 0;">Appointments</div>
<div class="t" style="left:622px;top:659.00px;font-size:12px;line-height:12px;color:#000;font-weight:normal;transform:scaleX(0.875);transform-origin:0 0;">Send Text</div>
<div class="t" style="left:470.5px;top:686.00px;font-size:12px;line-height:12px;color:#1E34A8;font-weight:normal;letter-spacing:-0.02px;">Billing and Collections</div>
<div class="r" style="left:592.2px;top:691px;width:149.79999999999995px;height:1px;background:#A9B9D9"></div>
<div class="t" style="left:742px;top:686.00px;font-size:12px;line-height:12px;color:#3D5399;font-weight:normal;letter-spacing:-0.12px;text-decoration:underline;">Select/Clear All</div>
<svg class="r" style="left:830px;top:688px" width="9" height="7" viewBox="0 0 9 7"><path d="M1.2 5.5 L4.5 2 L7.8 5.5" fill="none" stroke="#1A3A9C" stroke-width="2"/></svg>
<div class="r" style="left:710px;top:714px;width:71px;height:19px;background:#CCCCCC;border:1px solid #BFBFBF"></div>
<div class="t" style="left:734px;top:718.00px;font-size:12px;line-height:12px;color:#A3A3A3;font-weight:normal;transform:scaleX(0.92);transform-origin:0 0;text-shadow:1px 1px 0 #F4F4F4;">Save</div>
<div class="r" style="left:791px;top:714px;width:71px;height:19px;background:#E1E1E1;border:1px solid #ADADAD"></div>
<div class="t" style="left:813px;top:718.00px;font-size:12px;line-height:12px;color:#000;font-weight:normal;transform:scaleX(0.93);transform-origin:0 0;">Close</div>
<svg class="r" style="left:866px;top:737px" width="10" height="10" viewBox="0 0 10 10"><g fill="#BDBDBD"><rect x="7" y="1" width="2" height="2"/><rect x="4" y="4" width="2" height="2"/><rect x="7" y="4" width="2" height="2"/><rect x="1" y="7" width="2" height="2"/><rect x="4" y="7" width="2" height="2"/><rect x="7" y="7" width="2" height="2"/></g></svg>
</body></html>
